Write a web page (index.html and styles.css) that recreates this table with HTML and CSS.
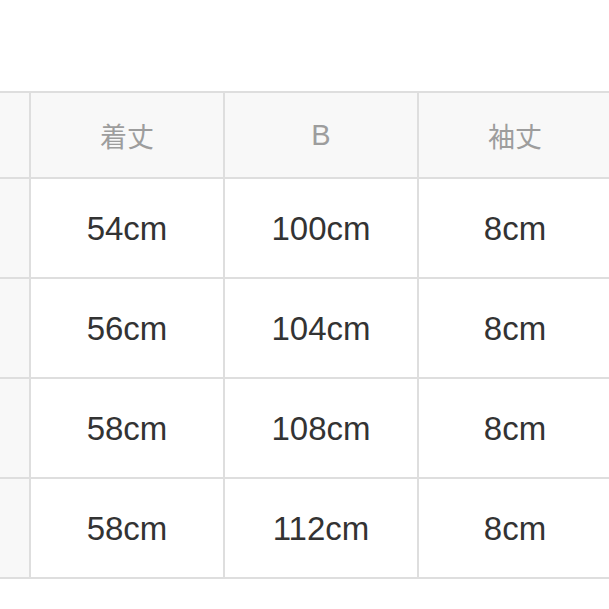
FILE: index.html
```html
<!DOCTYPE html>
<html lang="ja">
<head>
<meta charset="utf-8">
<link rel="stylesheet" href="styles.css">
</head>
<body>
<div class="frame">
<div class="sheet">
  <div class="cell head side"></div>
  <div class="cell head">着丈</div>
  <div class="cell head latin">B</div>
  <div class="cell head">袖丈</div>
  <div class="cell head"></div>

  <div class="cell side"></div>
  <div class="cell">54cm</div>
  <div class="cell">100cm</div>
  <div class="cell">8cm</div>
  <div class="cell"></div>

  <div class="cell side"></div>
  <div class="cell">56cm</div>
  <div class="cell">104cm</div>
  <div class="cell">8cm</div>
  <div class="cell"></div>

  <div class="cell side"></div>
  <div class="cell">58cm</div>
  <div class="cell">108cm</div>
  <div class="cell">8cm</div>
  <div class="cell"></div>

  <div class="cell side"></div>
  <div class="cell">58cm</div>
  <div class="cell">112cm</div>
  <div class="cell">8cm</div>
  <div class="cell"></div>
</div>
</div>
</body>
</html>
```
FILE: styles.css
```css
html, body {
  margin: 0;
  padding: 0;
  background: #ffffff;
  overflow: hidden;
}
body {
  font-family: "Liberation Sans", "Noto Sans CJK JP", sans-serif;
}
.frame {
  width: 609px;
  height: 609px;
  padding-top: 91px;
  box-sizing: border-box;
  overflow: hidden;
}
.sheet {
  display: grid;
  grid-template-columns: repeat(5, 192px);
  grid-template-rows: 84px repeat(4, 98px);
  gap: 2px;
  padding: 2px;
  background: #dedede;
  margin-left: -165px;
  width: max-content;
}
.cell {
  background: #ffffff;
  display: flex;
  align-items: center;
  justify-content: center;
  font-size: 33px;
  color: #333333;
  padding-top: 2px;
}
.cell.head {
  background: #f8f8f8;
  color: #9d9d9d;
  font-size: 27px;
  padding-top: 0;
}
.cell.latin {
  font-size: 29px;
}
.cell.side {
  background: #f8f8f8;
}
```
